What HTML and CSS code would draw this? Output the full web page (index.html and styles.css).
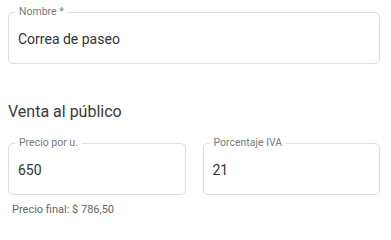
FILE: index.html
```html
<!DOCTYPE html>
<html lang="es">
<head>
<meta charset="utf-8">
<title>Producto</title>
<link rel="stylesheet" href="styles.css">
</head>
<body>
<form class="form">
  <div class="field">
    <label class="field-label" for="nombre">Nombre *</label>
    <input class="field-input" id="nombre" type="text" value="Correa de paseo">
  </div>

  <h2 class="section-title">Venta al público</h2>

  <div class="row">
    <div class="col">
      <div class="field">
        <label class="field-label" for="precio">Precio por u.</label>
        <input class="field-input" id="precio" type="text" value="650">
      </div>
      <p class="helper">Precio final: $ 786,50</p>
    </div>
    <div class="col">
      <div class="field">
        <label class="field-label" for="iva">Porcentaje IVA</label>
        <input class="field-input" id="iva" type="text" value="21">
      </div>
    </div>
  </div>
</form>
</body>
</html>
```

FILE: styles.css
```css
html, body {
  margin: 0;
  padding: 0;
  background: #ffffff;
}

body {
  font-family: Roboto, "Liberation Sans", Arial, sans-serif;
  color: #333333;
}

.form {
  box-sizing: border-box;
  width: 391px;
  padding: 12px 11px 0 8px;
  margin: 0;
}

.field {
  position: relative;
  box-sizing: border-box;
  height: 52px;
  border: 1px solid #dedede;
  border-radius: 5px;
  background: #ffffff;
}

.field-label {
  position: absolute;
  top: -7px;
  left: 6px;
  padding: 0 4px;
  background: #ffffff;
  font-size: 10.5px;
  line-height: 12px;
  color: #7a7a7a;
  white-space: nowrap;
}

.field-input {
  display: block;
  box-sizing: border-box;
  width: 100%;
  margin: 0;
  border: 0;
  outline: none;
  background: transparent;
  padding: 16px 10px 14px 9px;
  font-family: inherit;
  font-size: 14px;
  line-height: 20px;
  height: 50px;
  color: #333333;
}

.section-title {
  margin: 38px 0 21px 0;
  font-size: 16px;
  font-weight: 400;
  line-height: 20px;
  color: #3a3a3a;
}

.row {
  display: grid;
  grid-template-columns: 1fr 1fr;
  column-gap: 17px;
}

.helper {
  margin: 8px 0 0 4px;
  font-size: 11px;
  line-height: 14px;
  color: #666666;
}
```
